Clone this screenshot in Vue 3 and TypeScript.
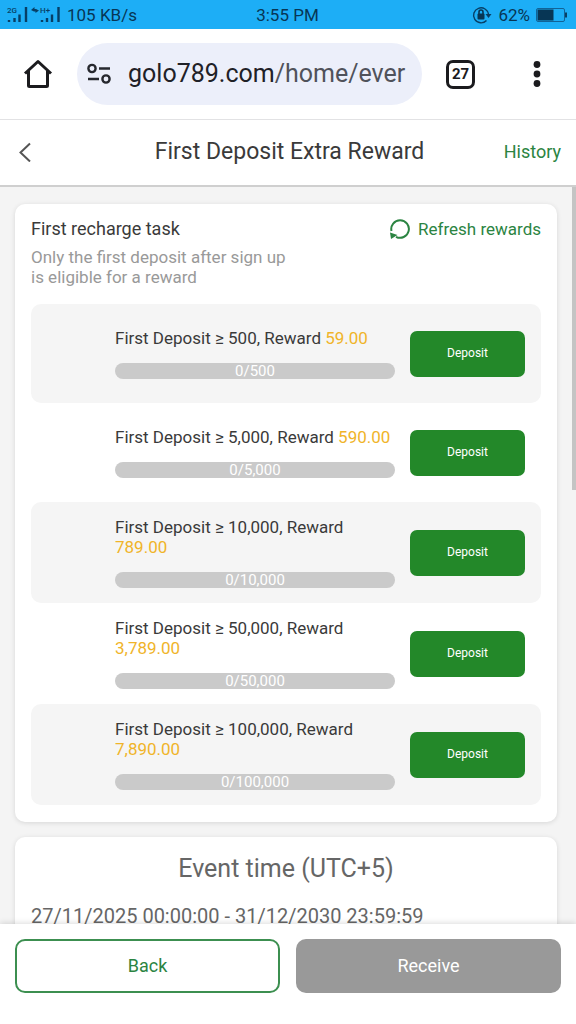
<script setup lang="ts">
interface Task {
  target: string
  reward: string
}

const tasks: Task[] = [
  { target: '500', reward: '59.00' },
  { target: '5,000', reward: '590.00' },
  { target: '10,000', reward: '789.00' },
  { target: '50,000', reward: '3,789.00' },
  { target: '100,000', reward: '7,890.00' },
]
</script>

<template>
  <div class="screen">
    <div class="status">
      <div class="status-left">
        <svg class="signal" width="56" height="18" viewBox="0 0 56 18" aria-hidden="true">
          <text x="0" y="7">2G</text>
          <text x="33" y="7">H+</text>
          <g fill="none" stroke="#073f66">
            <path d="M2 14v2M7.500 12v4M12.500 8.500v7.500M19 1v15" stroke-width="2.400" />
            <path d="M35 14v2M40 12v4M45 8.500v7.500M51.500 1v15" stroke-width="2.400" />
          </g>
          <path d="M24 4l3.500-3v2H29l3 1.500L28.500 7V5.500H27z" fill="#073f66" />
        </svg>
        <span>105 KB/s</span>
      </div>
      <span class="clock">3:55 PM</span>
      <div class="status-right">
        <svg width="20" height="18" viewBox="0 0 20 18" aria-hidden="true">
          <path d="M14.500 14.500A7.500 7.500 0 1 1 16.500 8.500" fill="none" stroke="#073f66" stroke-width="1.400" />
          <path d="M13.500 8h6l-3 4z" fill="#073f66" />
          <rect x="5.500" y="7.500" width="7" height="6" rx="1" fill="#073655" />
          <path d="M7 8V6a2 2 0 0 1 4 0v2" fill="none" stroke="#073655" stroke-width="1.600" />
        </svg>
        <span>62%</span>
        <svg width="32" height="16" viewBox="0 0 32 16" aria-hidden="true">
          <rect x="0.500" y="1.500" width="28" height="13" rx="1.500" fill="none" stroke="#126397" />
          <rect x="1.500" y="2.500" width="16" height="11" fill="#073655" />
          <rect x="29" y="5.500" width="2" height="5" fill="#073f66" />
        </svg>
      </div>
    </div>

    <div class="browser">
      <button class="icon-btn" aria-label="Home">
        <svg width="30" height="30" viewBox="0 0 30 30" aria-hidden="true">
          <path d="M2 14.500 15 2.500 28 14.500M5.500 12V26.500a1 1 0 0 0 1 1h17a1 1 0 0 0 1-1V12" fill="none" stroke="#1b1b1e" stroke-width="3" stroke-linejoin="round" />
        </svg>
      </button>
      <div class="address">
        <svg width="26" height="22" viewBox="0 0 26 22" aria-hidden="true">
          <g fill="none" stroke="#26282e" stroke-width="2.400">
            <circle cx="6" cy="5.500" r="3.600" />
            <path d="M13 5.500H24M2 16h11" />
            <circle cx="20" cy="16" r="3.600" />
          </g>
        </svg>
        <span class="url">golo789.com<span class="path">/home/ever</span></span>
      </div>
      <button class="tabs" aria-label="27 open tabs">27</button>
      <button class="icon-btn more" aria-label="More options">
        <svg width="8" height="28" viewBox="0 0 8 28" fill="#1b1b1e" aria-hidden="true">
          <circle cx="4" cy="4.500" r="3.400" />
          <circle cx="4" cy="14" r="3.400" />
          <circle cx="4" cy="23.500" r="3.400" />
        </svg>
      </button>
    </div>

    <header class="titlebar">
      <button class="icon-btn back-arrow" aria-label="Go back">
        <svg width="14" height="20" viewBox="0 0 14 20" aria-hidden="true">
          <path d="M12 1.500 2.500 10.500 12 19.500" fill="none" stroke="#555" stroke-width="2" />
        </svg>
      </button>
      <h1>First Deposit Extra Reward</h1>
      <a href="#history">History</a>
    </header>

    <main class="content">
      <section class="card">
        <div class="card-head">
          <div>
            <h2>First recharge task</h2>
            <p>Only the first deposit after sign up<br>is eligible for a reward</p>
          </div>
          <button class="refresh">
            <svg width="22" height="20" viewBox="0 0 22 20" aria-hidden="true">
              <path d="M2.500 12A8.800 8.800 0 1 1 7 17.800" fill="none" stroke="#2b8442" stroke-width="2" />
              <path d="M1 13.500l7.500 2.500-6.500 4z" fill="#2b8442" />
            </svg>
            <span>Refresh rewards</span>
          </button>
        </div>
        <ul class="tasks">
          <li v-for="task in tasks" :key="task.target" class="task">
            <div class="info">
              <div class="label">First Deposit ≥ {{ task.target }}, Reward <span class="amount">{{ task.reward }}</span></div>
              <div class="bar">0/{{ task.target }}</div>
            </div>
            <button class="deposit">Deposit</button>
          </li>
        </ul>
      </section>

      <section class="card event">
        <h2>Event time (UTC+5)</h2>
        <p>27/11/2025 00:00:00 - 31/12/2030 23:59:59</p>
      </section>
      <div class="scrollbar"></div>
    </main>

    <footer class="actions">
      <button class="back">Back</button>
      <button class="receive">Receive</button>
    </footer>
  </div>
</template>

<style>
html,
body {
  margin: 0;
  background: #f4f4f4;
}
</style>

<style scoped>
* {
  box-sizing: border-box;
}

.screen {
  display: flex;
  flex-direction: column;
  height: 100vh;
  overflow: hidden;
  font-family: Roboto, "Liberation Sans", sans-serif;
  color: #3a3a3a;
}

h1,
h2,
p,
ul {
  margin: 0;
  padding: 0;
  font-weight: 400;
}

button {
  padding: 0;
  border: 0;
  background: none;
  font: inherit;
  color: inherit;
}

svg {
  display: block;
  flex: none;
}

.status {
  flex: none;
  display: grid;
  grid-template-columns: 1fr auto 1fr;
  align-items: center;
  height: 29px;
  padding: 0 8px 0 7px;
  background: #1daef6;
  color: #073655;
  font-size: 17px;
  line-height: 28px;
}

.status-left,
.status-right {
  display: flex;
  align-items: center;
}

.status-left {
  gap: 4px;
}

.status-right {
  justify-content: flex-end;
  gap: 6px;
}

.signal text {
  font-size: 8px;
  font-weight: 500;
  fill: #073f66;
}

.browser {
  flex: none;
  display: flex;
  align-items: center;
  height: 91px;
  padding: 0 35px 0 23px;
  background: #fff;
  border-bottom: 1px solid #e2e2e4;
}

.address {
  flex: 1;
  min-width: 0;
  display: flex;
  align-items: center;
  gap: 16px;
  height: 62px;
  margin-left: 24px;
  padding: 0 8px 0 9px;
  border-radius: 31px;
  background: #eceffa;
}

.url {
  min-width: 0;
  white-space: nowrap;
  font-size: 25px;
  line-height: 36px;
  color: #1f2127;
}

.path {
  color: #50525a;
}

.tabs {
  width: 29px;
  height: 29px;
  margin-left: 24px;
  border: 3px solid #1b1b1e;
  border-radius: 7px;
  font-size: 15px;
  line-height: 22px;
  font-weight: 700;
  color: #1b1b1e;
}

.more {
  margin-left: 58px;
}

.titlebar {
  flex: none;
  display: grid;
  grid-template-columns: 1fr auto 1fr;
  align-items: center;
  height: 67px;
  padding: 0 15px 1px 18px;
  background: #fff;
  border-bottom: 2px solid #cfcfcf;
}

.back-arrow {
  justify-self: start;
}

.titlebar h1 {
  font-size: 23px;
  line-height: 32px;
}

.titlebar a {
  justify-self: end;
  font-size: 18px;
  line-height: 32px;
  color: #2b8442;
  text-decoration: none;
}

.content {
  flex: 1;
  min-height: 0;
  position: relative;
  overflow: hidden;
  display: flex;
  flex-direction: column;
  gap: 15px;
  padding: 17px 19px 0 15px;
  background: #f4f4f4;
}

.card {
  flex: none;
  padding: 15px 16px 17px;
  border-radius: 10px;
  background: #fff;
  box-shadow: 0 1px 5px rgba(0, 0, 0, 0.12);
}

.card-head {
  display: flex;
  justify-content: space-between;
  align-items: flex-start;
}

.card-head h2 {
  font-size: 18px;
  line-height: 20px;
  margin-bottom: 8px;
}

.card-head p {
  font-size: 17px;
  line-height: 20px;
  color: #999;
}

.refresh {
  display: flex;
  align-items: center;
  gap: 7px;
  font-size: 17px;
  line-height: 18px;
  color: #2b8442;
}

.tasks {
  list-style: none;
  margin-top: 17px;
}

.task {
  display: flex;
  align-items: center;
  gap: 15px;
  min-height: 99px;
  padding: 15px 16px 15px 84px;
  border-radius: 10px;
}

.task:nth-child(odd) {
  background: #f5f5f5;
}

.info {
  flex: 1;
  min-width: 0;
}

.label {
  font-size: 17px;
  line-height: 20px;
}

.amount {
  color: #f0b429;
}

.bar {
  height: 16px;
  margin-top: 15px;
  border-radius: 8px;
  background: #cacaca;
  color: #fff;
  font-size: 15px;
  line-height: 16px;
  text-align: center;
}

.deposit {
  width: 115px;
  height: 46px;
  padding-bottom: 2px;
  border-radius: 7px;
  background: #238829;
  color: #fff;
  font-size: 12px;
}

.event h2 {
  font-size: 25px;
  line-height: 34px;
  text-align: center;
  color: #666;
}

.event p {
  margin-top: 18px;
  font-size: 20px;
  line-height: 24px;
  color: #666;
}

.scrollbar {
  position: absolute;
  top: 0;
  right: 0;
  width: 4px;
  height: 303px;
  background: #c4c4c4;
}

.actions {
  flex: none;
  position: relative;
  display: grid;
  grid-template-columns: 1fr 1fr;
  gap: 16px;
  padding: 15px 15px 31px;
  background: #fff;
  box-shadow: 0 -1px 6px rgba(0, 0, 0, 0.14);
}

.actions button {
  height: 54px;
  padding-bottom: 2px;
  border-radius: 10px;
  font-size: 18px;
}

.back {
  border: 2px solid #3c8f50;
  color: #2b8442;
}

.receive {
  background: #999;
  color: #fff;
}
</style>
